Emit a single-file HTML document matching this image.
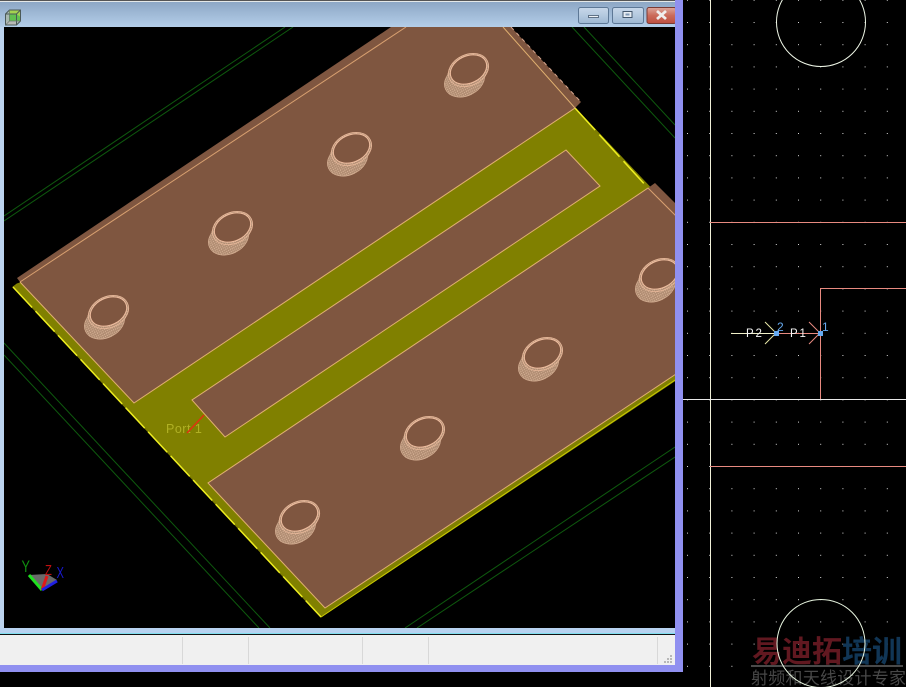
<!DOCTYPE html>
<html>
<head>
<meta charset="utf-8">
<style>
html,body{margin:0;padding:0;background:#000;}
body{width:906px;height:687px;overflow:hidden;position:relative;}
svg{position:absolute;left:0;top:0;}
</style>
</head>
<body>
<svg width="906" height="687" viewBox="0 0 906 687" xmlns="http://www.w3.org/2000/svg">
<defs>
<linearGradient id="tb" x1="0" y1="0" x2="0" y2="1"><stop offset="0" stop-color="#8aa4c2"/><stop offset="1" stop-color="#b4cee9"/></linearGradient>
<linearGradient id="btn" x1="0" y1="0" x2="0" y2="1"><stop offset="0" stop-color="#c8d8ea"/><stop offset="0.5" stop-color="#b4c9df"/><stop offset="1" stop-color="#9db7d2"/></linearGradient>
<linearGradient id="cls" x1="0" y1="0" x2="0" y2="1"><stop offset="0" stop-color="#dca79c"/><stop offset="0.5" stop-color="#cb6a5a"/><stop offset="1" stop-color="#bc4f40"/></linearGradient>
<pattern id="dots" x="687" y="22" width="22.2" height="22.2" patternUnits="userSpaceOnUse"><rect x="0" y="0" width="1" height="1" fill="#d8d8d8"/></pattern>
<pattern id="hatch" width="2" height="2" patternUnits="userSpaceOnUse"><rect width="2" height="2" fill="#b08c72"/><rect width="1" height="1" fill="#d8b498"/></pattern>
<clipPath id="vp"><rect x="4" y="27" width="671" height="601"/></clipPath>
<g id="via">
  <ellipse cx="-2.500" cy="5.500" rx="21" ry="15.500" transform="rotate(-25 -2.500 5.500)" fill="url(#hatch)" stroke="#d8b296" stroke-width="0.600"/>
  <ellipse cx="-0.500" cy="0" rx="21" ry="15.500" transform="rotate(-25 -0.500 0)" fill="url(#hatch)"/>
  <ellipse cx="1.500" cy="-5" rx="21" ry="15.500" transform="rotate(-25 1.500 -5)" fill="url(#hatch)" stroke="#e8b89a" stroke-width="0.800"/>
  <ellipse cx="1.500" cy="-5.500" rx="19" ry="13.500" transform="rotate(-25 1.500 -5.500)" fill="#7f5640" stroke="#eebc9e" stroke-width="1"/>
</g>
</defs>

<rect width="906" height="687" fill="#000"/>

<!-- Right layout panel -->
<rect x="683" y="0" width="223" height="687" fill="url(#dots)"/>
<line x1="710.5" y1="0" x2="710.5" y2="687" stroke="#f0f0d8" stroke-width="1"/>
<line x1="683" y1="399.5" x2="906" y2="399.5" stroke="#e8e8e8" stroke-width="1"/>
<line x1="710" y1="222.5" x2="906" y2="222.5" stroke="#e88a80" stroke-width="1"/>
<line x1="710" y1="466.5" x2="906" y2="466.5" stroke="#e88a80" stroke-width="1"/>
<path d="M906 288.5H820.5V399" fill="none" stroke="#e88a80" stroke-width="1"/>
<circle cx="821" cy="22" r="44.5" fill="none" stroke="#f0f8e8" stroke-width="1"/>

<!-- Watermark -->
<text x="752" y="662" font-family="'Liberation Sans','Noto Sans CJK SC',sans-serif" font-size="30" font-weight="700" fill="#611820">易迪拓<tspan fill="#113656">培训</tspan></text>
<rect x="751" y="665" width="152" height="2" fill="#4a4a4a"/>
<text x="751" y="684" font-family="'Liberation Sans','Noto Sans CJK SC',sans-serif" font-size="17" textLength="155" fill="#484848">射频和天线设计专家</text>
<circle cx="821" cy="643.5" r="44" fill="none" stroke="#e8f5e0" stroke-width="1"/>

<!-- Ports -->
<line x1="731" y1="333.5" x2="776" y2="333.5" stroke="#f0f0c8" stroke-width="1"/>
<line x1="776" y1="333.5" x2="820" y2="333.5" stroke="#e88a80" stroke-width="1"/>
<path d="M765 322L776 333L765 344" fill="none" stroke="#e8e8a8" stroke-width="1"/>
<path d="M809 322L820 333L809 344" fill="none" stroke="#e88a80" stroke-width="1"/>
<rect x="774" y="331" width="5" height="5" fill="#66aaf0"/>
<rect x="818" y="331" width="5" height="5" fill="#66aaf0"/>
<text x="746" y="337" font-family="'Liberation Sans',sans-serif" font-size="11.500" letter-spacing="1.800" fill="#f4f4f4">P2</text>
<text x="790" y="337" font-family="'Liberation Sans',sans-serif" font-size="11.500" letter-spacing="1.800" fill="#f4f4f4">P1</text>
<text x="777" y="331" font-family="'Liberation Sans',sans-serif" font-size="12" fill="#66aaf0">2</text>
<text x="822" y="331" font-family="'Liberation Sans',sans-serif" font-size="12" fill="#66aaf0">1</text>

<!-- Window frame -->
<rect x="675" y="0" width="8" height="672" fill="#9090f0"/>
<rect x="0" y="665" width="675" height="7" fill="#9090f0"/>
<rect x="0" y="0" width="675" height="27" fill="url(#tb)"/>
<rect x="0" y="0" width="675" height="1" fill="#555"/>
<rect x="0" y="1" width="675" height="1" fill="#e4e8e8"/>
<rect x="0" y="27" width="4" height="601" fill="#bcd3ee"/>
<rect x="0" y="628" width="675" height="5" fill="#b8d2f0"/>
<rect x="0" y="633" width="675" height="1" fill="#80e0f0"/>
<rect x="0" y="634" width="675" height="1" fill="#111"/>
<rect x="0" y="635" width="675" height="30" fill="#f0f0f0"/>
<g fill="#d8d8d8">
<rect x="182" y="637" width="1" height="27"/>
<rect x="248" y="637" width="1" height="27"/>
<rect x="362" y="637" width="1" height="27"/>
<rect x="428" y="637" width="1" height="27"/>
<rect x="657" y="637" width="1" height="27"/>
</g>
<g fill="#b8b8b8">
<rect x="670" y="655" width="2" height="2"/>
<rect x="670" y="658" width="2" height="2"/><rect x="667" y="658" width="2" height="2"/>
<rect x="670" y="661" width="2" height="2"/><rect x="667" y="661" width="2" height="2"/><rect x="664" y="661" width="2" height="2"/>
</g>

<!-- Title icon -->
<path d="M5.500 14L9.500 10H20.500V21L16.500 25H5.500Z" fill="#a8b8b0"/>
<rect x="9" y="11" width="11" height="10" fill="#62c050"/>
<path d="M9 10.500H20.500V17L16.500 14H9Z" fill="#a4d250"/>
<path d="M6 21.500H16L16.500 25H6Z" fill="#b8bab6"/>
<path d="M5.500 14L9.500 10H20.500V21L16.500 25H5.500Z M5.500 14H16.500V25 M16.500 14L20.500 10" fill="none" stroke="#4c5a58" stroke-width="1"/>
<path d="M9.500 10V21H20.500 M9.500 21L5.500 25" fill="none" stroke="#6a7a70" stroke-width="0.700"/>

<!-- Window buttons -->
<rect x="578.500" y="7.500" width="30" height="16" rx="2" fill="url(#btn)" stroke="#5d7896"/>
<rect x="588.500" y="15.500" width="10" height="2" fill="#eef2f6" stroke="#44586e" stroke-width="0.800"/>
<rect x="612.500" y="7.500" width="31" height="16" rx="2" fill="url(#btn)" stroke="#5d7896"/>
<rect x="623" y="11.500" width="9" height="6" fill="#e8eef4" stroke="#44586e" stroke-width="1"/>
<rect x="625.500" y="13.500" width="4" height="2" fill="#7f98b4"/>
<rect x="647" y="7.500" width="29" height="16" rx="2" fill="url(#cls)" stroke="#7a3a34"/>
<path d="M657 11L666 19M666 11L657 19" stroke="#f0eeee" stroke-width="2.800"/>
<rect x="675" y="0" width="8" height="27" fill="#9090f0"/>

<!-- 3D viewport -->
<rect x="4" y="27" width="671" height="601" fill="#000"/>
<g clip-path="url(#vp)">
  <g fill="none" stroke="#0e5a0e" stroke-width="1">
    <line x1="285" y1="27" x2="4" y2="216"/>
    <line x1="293" y1="27" x2="4" y2="221"/>
    <line x1="572" y1="27" x2="675" y2="138"/>
    <line x1="584" y1="27" x2="675" y2="125"/>
    <line x1="4" y1="355" x2="259" y2="628"/>
    <line x1="4" y1="343" x2="270" y2="628"/>
    <line x1="405" y1="628" x2="675" y2="447"/>
    <line x1="417" y1="628" x2="675" y2="457"/>
  </g>
  <!-- substrate -->
  <polygon points="13,287 17,284 575,108 700,240 700,364 321,617" fill="#808000" stroke="#808000" stroke-width="1"/>
  <path d="M13 287L321 617" stroke="#eeee20" stroke-width="1.500" stroke-dasharray="28 5" fill="none"/>
  <path d="M321 617L690 370" stroke="#c8c800" stroke-width="1" fill="none"/>
  <path d="M575 108L648 188" stroke="#eeee20" stroke-width="1.500" stroke-dasharray="30 6" fill="none"/>
  <!-- upper plane -->
  <polygon points="17,278 391,27 511,27 581,102 575,108 134,403 20,282" fill="#7f5640"/>
  <path d="M20 282L406 27" stroke="#d8a070" stroke-width="1" fill="none"/>
  <path d="M511 27L581 102" stroke="#d8a890" stroke-width="1" stroke-dasharray="4 4" fill="none"/>
  <path d="M503 27L575 108L134 403L20 282" stroke="#e0b070" stroke-width="1" fill="none"/>
  <!-- slot -->
  <polygon points="566,150 600,186 225,437 192,400" fill="#7f5640" stroke="#e0b070" stroke-width="1"/>
  <!-- lower plane -->
  <polygon points="648,188 655,183 700,228 700,358 325,608 208,483" fill="#7f5640"/>
  <path d="M648 188L208 483L325 608L700 358" stroke="#e0b070" stroke-width="1" fill="none"/>
  <path d="M648 188L690 230" stroke="#d8a070" stroke-width="1" fill="none"/>
  <!-- vias -->
  <use href="#via" x="107" y="317"/>
  <use href="#via" x="231" y="233"/>
  <use href="#via" x="350" y="154"/>
  <use href="#via" x="467" y="75"/>
  <use href="#via" x="298" y="522"/>
  <use href="#via" x="423" y="438"/>
  <use href="#via" x="541" y="359"/>
  <use href="#via" x="658" y="280"/>
  <!-- port -->
  <text x="166" y="433" font-family="'Liberation Sans',sans-serif" font-size="12.500" letter-spacing="0.500" fill="#b0b024">Port 1</text>
  <line x1="187" y1="433" x2="204" y2="415" stroke="#e03010" stroke-width="1.500"/>
  <!-- axes -->
  <polygon points="42,590 29,575 47,574 57,580" fill="#6a6a6a"/>
  <line x1="42" y1="590" x2="29" y2="575" stroke="#20e020" stroke-width="3"/>
  <line x1="42" y1="590" x2="47" y2="576" stroke="#e01818" stroke-width="3"/>
  <line x1="42" y1="590" x2="57" y2="581" stroke="#2020e0" stroke-width="3"/>
  <text transform="translate(21.500 572) scale(0.750 1)" font-family="'Liberation Sans',sans-serif" font-size="17" fill="#109010">Y</text>
  <text transform="translate(45 575) scale(0.750 1)" font-family="'Liberation Sans',sans-serif" font-size="15" fill="#c01010">Z</text>
  <text transform="translate(56.500 578) scale(0.700 1)" font-family="'Liberation Sans',sans-serif" font-size="16" fill="#1818d0">X</text>
</g>
</svg>
</body>
</html>
